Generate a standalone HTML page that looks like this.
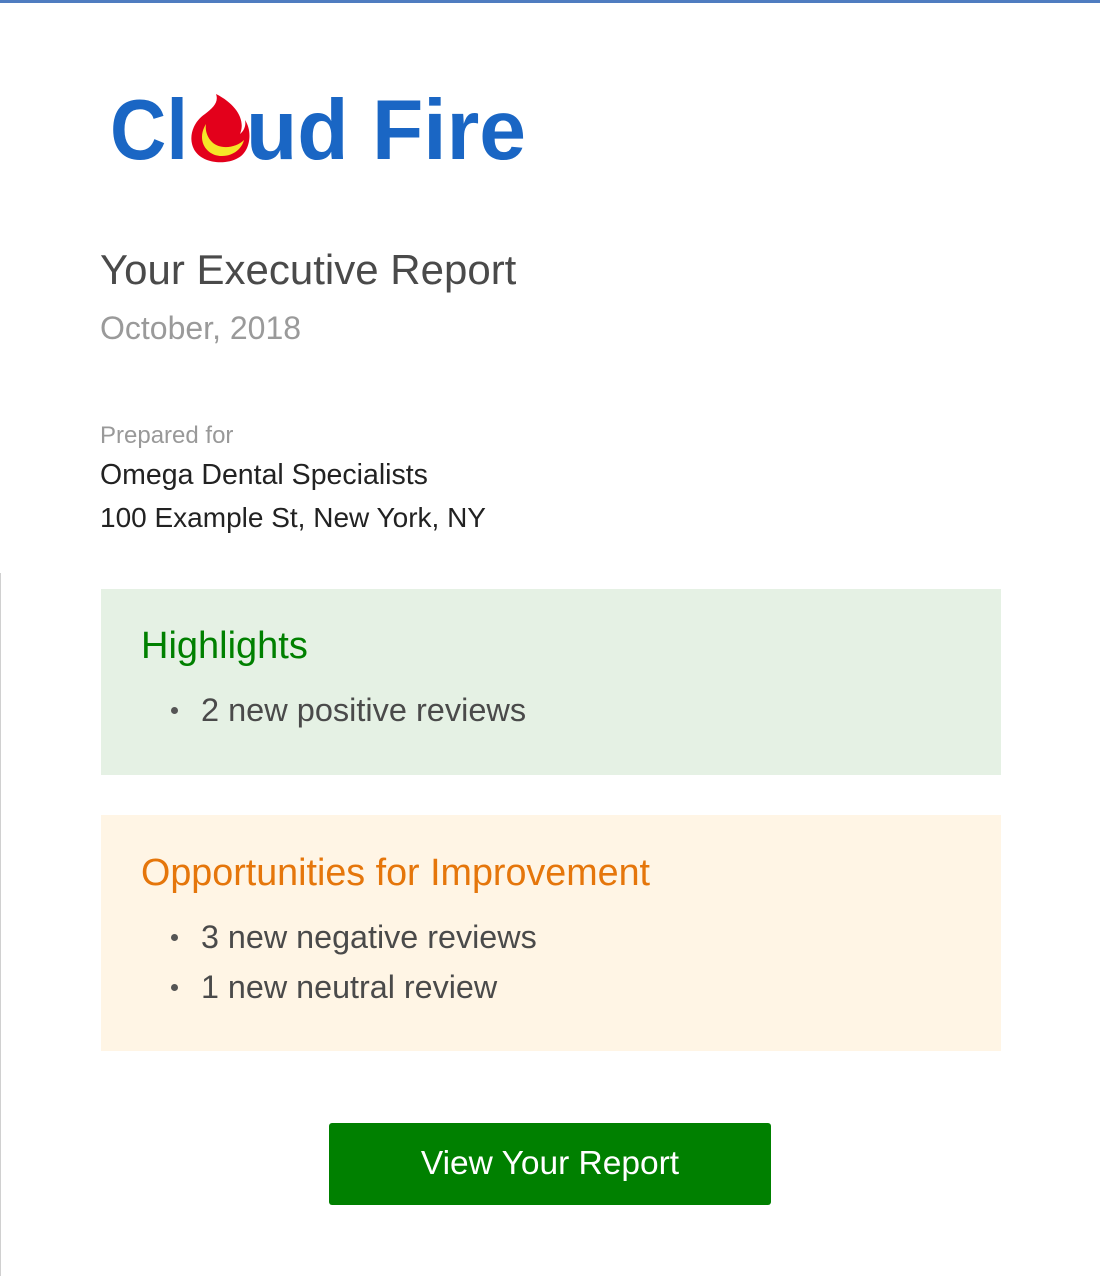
<!DOCTYPE html>
<html><head><meta charset="utf-8"><style>
body{margin:0;width:1100px;height:1276px;background:#fff;position:relative;overflow:hidden;font-family:"Liberation Sans",sans-serif}
.top{position:absolute;left:0;top:0;width:1100px;height:3px;background:#4f7cc0}
.lb{position:absolute;left:0;top:573px;width:1px;height:703px;background:#d0d0d0}
.t{position:absolute;white-space:nowrap}
.box{position:absolute;left:101px;width:900px}
ul{margin:0;padding:0;list-style:none}
li{position:relative;padding-left:100px}
li:before{content:"";position:absolute;left:70px;top:50%;width:7px;height:7px;border-radius:50%;background:#555;margin-top:-3px}
</style></head><body>
<div class="top"></div><div class="lb"></div>
<svg style="position:absolute;left:0;top:0" width="600" height="200">
<g font-family="Liberation Sans" font-weight="bold" font-size="85" fill="#1a66c4">
<text x="110" y="159" textLength="78" lengthAdjust="spacingAndGlyphs">Cl</text>
<text x="246" y="159" textLength="280" lengthAdjust="spacingAndGlyphs">ud Fire</text>
</g>
<path d="M216 94 C236 104 246 120 240 134 C245 130 246 124 245 120 C253 132 250 152 238 158 C226 165 204 164 195 151 C187 138 193 122 205 114 C213 108 219 102 216 94Z" fill="#e3001b"/>
<path d="M206 124 C196 140 206 156 222 156 C234 156 242 148 244 140 C236 148 220 150 212 142 C207 137 205 130 206 124Z" fill="#f5e628"/>
</svg>
<div class="t" style="left:100px;top:246px;font-size:42px;color:#4a4a4a">Your Executive Report</div>
<div class="t" style="left:100px;top:310px;font-size:32px;color:#9a9a9a">October, 2018</div>
<div class="t" style="left:100px;top:422px;font-size:24px;color:#999">Prepared for</div>
<div class="t" style="left:100px;top:459px;font-size:28.5px;color:#222">Omega Dental Specialists</div>
<div class="t" style="left:100px;top:502px;font-size:28px;color:#222">100 Example St, New York, NY</div>
<div class="box" style="top:589px;height:186px;background:#e5f1e4">
<div class="t" style="left:40px;top:36px;font-size:38px;color:#008000">Highlights</div>
<ul style="position:absolute;top:101px;left:0;font-size:32.5px;color:#4a4a4a;line-height:40px"><li>2 new positive reviews</li></ul>
</div>
<div class="box" style="top:815px;height:236px;background:#fff5e5">
<div class="t" style="left:40px;top:36px;font-size:37.7px;color:#e5760b">Opportunities for Improvement</div>
<ul style="position:absolute;top:97px;left:0;font-size:32.3px;color:#4a4a4a;line-height:50px"><li>3 new negative reviews</li><li>1 new neutral review</li></ul>
</div>
<div style="position:absolute;left:329px;top:1123px;width:442px;height:82px;background:#008000;border-radius:3px;color:#fff;font-size:33.5px;line-height:82px;text-align:center">View Your Report</div>
</body></html>
